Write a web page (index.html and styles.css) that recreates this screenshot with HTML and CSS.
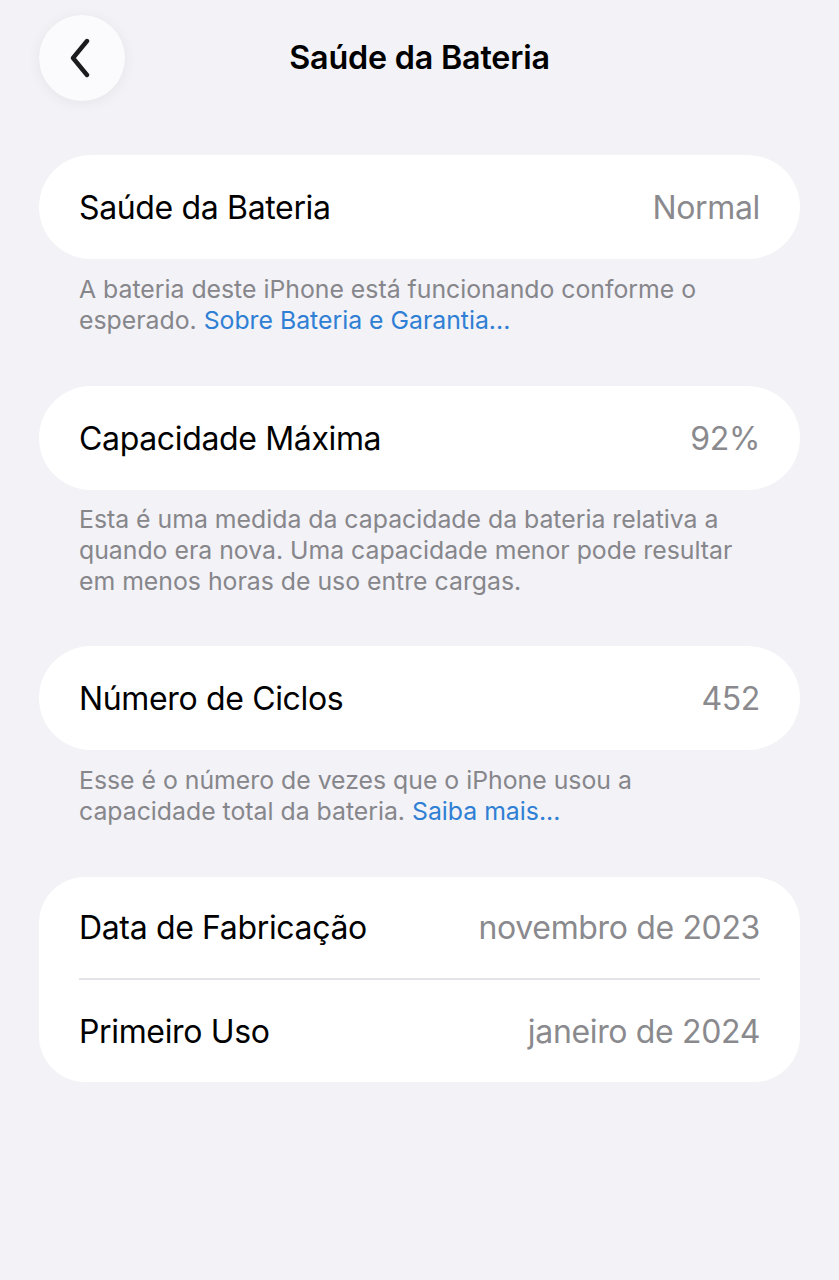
FILE: index.html
```html
<!DOCTYPE html>
<html lang="pt">
<head>
<meta charset="utf-8">
<link rel="stylesheet" href="styles.css">
</head>
<body>
<div class="page">
  <header class="nav">
    <button class="back" aria-label="Voltar">
      <svg width="22" height="40" viewBox="0 0 22 40"><path d="M18 3 L4 20 L18 37" fill="none" stroke="#1c1c1e" stroke-width="4.4" stroke-linecap="round" stroke-linejoin="round"/></svg>
    </button>
    <h1 class="title">Saúde da Bateria</h1>
  </header>

  <section class="group">
    <div class="card">
      <div class="row"><span class="label">Saúde da Bateria</span><span class="value">Normal</span></div>
    </div>
    <p class="footer">A bateria deste iPhone está funcionando conforme o esperado. <a class="link">Sobre Bateria e Garantia...</a></p>
  </section>

  <section class="group">
    <div class="card">
      <div class="row"><span class="label">Capacidade Máxima</span><span class="value">92%</span></div>
    </div>
    <p class="footer footer-tight">Esta é uma medida da capacidade da bateria relativa a quando era nova. Uma capacidade menor pode resultar em menos horas de uso entre cargas.</p>
  </section>

  <section class="group">
    <div class="card">
      <div class="row"><span class="label">Número de Ciclos</span><span class="value">452</span></div>
    </div>
    <p class="footer">Esse é o número de vezes que o iPhone usou a capacidade total da bateria. <a class="link">Saiba mais...</a></p>
  </section>

  <section class="group">
    <div class="card card-multi">
      <div class="row row-sep"><span class="label">Data de Fabricação</span><span class="value">novembro de 2023</span></div>
      <div class="row row-last"><span class="label">Primeiro Uso</span><span class="value">janeiro de 2024</span></div>
    </div>
  </section>
</div>
</body>
</html>
```
FILE: styles.css
```css
html, body {
  margin: 0;
  padding: 0;
  background: #f2f2f7;
}
body {
  font-family: Inter, "Liberation Sans", sans-serif;
  color: #000;
  -webkit-font-smoothing: antialiased;
}
.page {
  padding: 15px 39px 0 39px;
  width: 761px;
}
.nav {
  position: relative;
  height: 86px;
  display: flex;
  align-items: center;
  justify-content: center;
  margin-bottom: 54px;
}
.back {
  position: absolute;
  left: 0;
  top: 0;
  width: 86px;
  height: 86px;
  border-radius: 50%;
  border: none;
  background: #fbfbfd;
  box-shadow: 0 2px 14px rgba(0,0,0,0.06);
  display: flex;
  align-items: center;
  justify-content: center;
  padding: 0 4px 0 0;
}
.title {
  margin: 0 0 2px 0;
  font-size: 32.3px;
  font-weight: 600;
  letter-spacing: -0.2px;
}
.group {
  margin-bottom: 50px;
}
.card {
  background: #fff;
  border-radius: 52px;
  padding: 0 40px;
}
.card-multi {
  border-radius: 46px;
}
.row {
  height: 104px;
  display: flex;
  align-items: center;
  justify-content: space-between;
  font-size: 32px;
  letter-spacing: -0.35px;
}
.row-sep {
  height: 101px;
  border-bottom: 2px solid #e3e3e8;
}
.row-last {
  height: 102px;
}
.value {
  color: #8a8a8e;
}
.footer {
  margin: 15px 40px 0 40px;
  font-size: 24.8px;
  line-height: 31px;
  color: #86868b;
  letter-spacing: 0;
}
.footer-tight {
  margin-top: 14px;
  margin-bottom: -1px;
}
.link {
  color: #2f7fd4;
}
```
